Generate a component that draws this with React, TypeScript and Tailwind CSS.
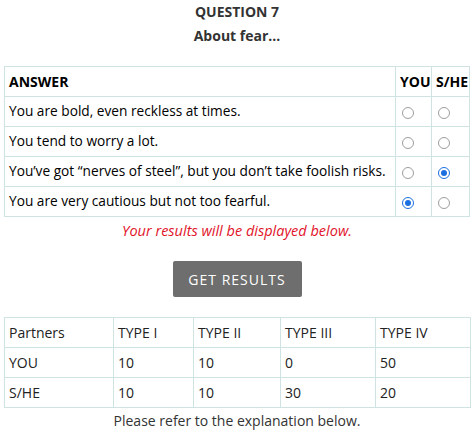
import React from 'react';

const answers = [
  { text: 'You are bold, even reckless at times.', you: false, she: false },
  { text: 'You tend to worry a lot.', you: false, she: false },
  { text: 'You’ve got “nerves of steel”, but you don’t take foolish risks.', you: false, she: true },
  { text: 'You are very cautious but not too fearful.', you: true, she: false },
];

const results = [
  ['Partners', 'TYPE I', 'TYPE II', 'TYPE III', 'TYPE IV'],
  ['YOU', '10', '10', '0', '50'],
  ['S/HE', '10', '10', '30', '20'],
];

const cell = 'border border-[#cfe4e2] h-[30px] px-[4px] align-middle';

function Radio({ checked }: { checked: boolean }) {
  return checked ? (
    <span className="ml-[2px] inline-flex items-center justify-center w-[12px] h-[12px] rounded-full border border-[#1b6fe0] bg-white align-middle">
      <span className="w-[6px] h-[6px] rounded-full bg-[#1b6fe0]" />
    </span>
  ) : (
    <span className="ml-[2px] inline-block w-[12px] h-[12px] rounded-full border border-[#9d9d9d] bg-white align-middle" />
  );
}

export default function App() {
  return (
    <div className="w-[474px] h-[433px] bg-white text-[#222] text-[14px] overflow-hidden" style={{ fontFamily: '"Open Sans", sans-serif' }}>
      <div className="pt-[1px] text-center font-bold text-[14px] leading-[22px] text-[#333]">
        <div>QUESTION 7</div>
        <div className="mt-[2px]">About fear...</div>
      </div>

      <table className="mt-[19px] ml-[4px] w-[466px] border-collapse table-fixed">
        <colgroup>
          <col />
          <col className="w-[36px]" />
          <col className="w-[38px]" />
        </colgroup>
        <thead>
          <tr>
            <th className={`${cell} text-left font-bold text-black`}>ANSWER</th>
            <th className={`${cell} text-center font-bold text-black px-0`}>YOU</th>
            <th className={`${cell} text-center font-bold text-black px-0`}>S/HE</th>
          </tr>
        </thead>
        <tbody>
          {answers.map((a, i) => (
            <tr key={i}>
              <td className={`${cell} text-black text-[13.7px] whitespace-nowrap`}>{a.text}</td>
              <td className={`${cell} text-left`}>
                <Radio checked={a.you} />
              </td>
              <td className={`${cell} text-left`}>
                <Radio checked={a.she} />
              </td>
            </tr>
          ))}
        </tbody>
      </table>

      <p className="mt-[3px] text-center italic text-[#e2142a] text-[14.5px] leading-[22px]">Your results will be displayed below.</p>

      <div className="flex justify-center mt-[19px]">
        <button className="w-[129px] h-[36px] bg-[#6e6e6e] rounded-[2px] text-white text-[14px] tracking-[1px]">
          GET RESULTS
        </button>
      </div>

      <table className="mt-[20px] ml-[4px] w-[466px] border-collapse table-fixed">
        <colgroup>
          <col className="w-[109px]" />
          <col className="w-[80px]" />
          <col className="w-[87px]" />
          <col className="w-[95px]" />
          <col className="w-[95px]" />
        </colgroup>
        <tbody>
          {results.map((row, i) => (
            <tr key={i}>
              {row.map((c, j) => (
                <td key={j} className="border border-[#cfe4e2] h-[30px] px-[4px] text-left text-[#222]">
                  {c}
                </td>
              ))}
            </tr>
          ))}
        </tbody>
      </table>

      <p className="mt-[2px] text-center text-[#333] leading-[22px]">Please refer to the explanation below.</p>
    </div>
  );
}
